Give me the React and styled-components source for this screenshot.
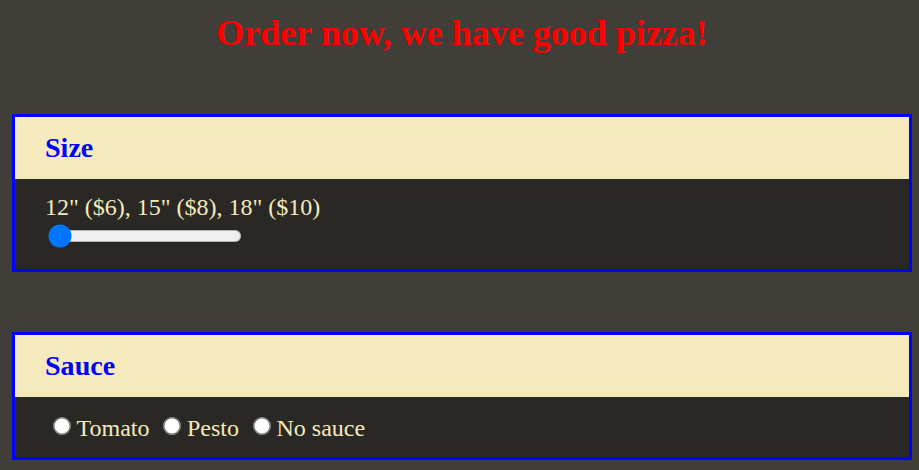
import React from 'react';
import styled, { createGlobalStyle } from 'styled-components';

const GlobalStyle = createGlobalStyle`
  html, body {
    margin: 0;
    padding: 0;
    background-color: #3f3e39;
  }
  body {
    font-family: 'Liberation Serif', 'Times New Roman', serif;
  }
`;

// whole page is rendered at 150%, sizes below are the unzoomed ones
const Page = styled.div`
  zoom: 1.5;
  padding: 8px;
  font-size: 16px;
  color: #f5eabc;
`;

const Container = styled.div`
  width: 600px;
`;

const Title = styled.h2`
  margin: 0 0 40px;
  font-size: 24px;
  font-weight: bold;
  color: #ff0000;
  text-align: center;
`;

const Section = styled.section`
  box-sizing: border-box;
  width: 600px;
  border: 2px solid #0000ff;
  margin-bottom: 40px;
`;

const SectionHeader = styled.div`
  padding: 10px 20px;
  background-color: #f5eabc;
`;

const SectionTitle = styled.h3`
  margin: 0;
  font-size: 18.72px;
  font-weight: bold;
  color: #0000ff;
`;

const SectionBody = styled.div`
  padding: 10px 20px ${(p) => (p.$extra ? '12px' : '10px')};
  background-color: #292824;
`;

const Slider = styled.input`
  display: block;
  margin: 2px;
`;

const RadioRow = styled.div`
  line-height: normal;
`;

const sizes = ['12" ($6)', '15" ($8)', '18" ($10)'];
const sauces = ['Tomato', 'Pesto', 'No sauce'];

export default function App() {
  return (
    <>
      <GlobalStyle />
      <Page>
        <Container>
          <Title>Order now, we have good pizza!</Title>
          <Section>
            <SectionHeader>
              <SectionTitle>Size</SectionTitle>
            </SectionHeader>
            <SectionBody $extra>
              <div>{sizes.join(', ')}</div>
              <Slider type="range" min="0" max="2" step="1" defaultValue="0" />
            </SectionBody>
          </Section>
          <Section>
            <SectionHeader>
              <SectionTitle>Sauce</SectionTitle>
            </SectionHeader>
            <SectionBody>
              <RadioRow>
                {sauces.map((s, i) => (
                  <React.Fragment key={s}>
                    <input type="radio" name="sauce" value={s} />
                    {s}
                    {i < sauces.length - 1 ? ' ' : ''}
                  </React.Fragment>
                ))}
              </RadioRow>
            </SectionBody>
          </Section>
        </Container>
      </Page>
    </>
  );
}
